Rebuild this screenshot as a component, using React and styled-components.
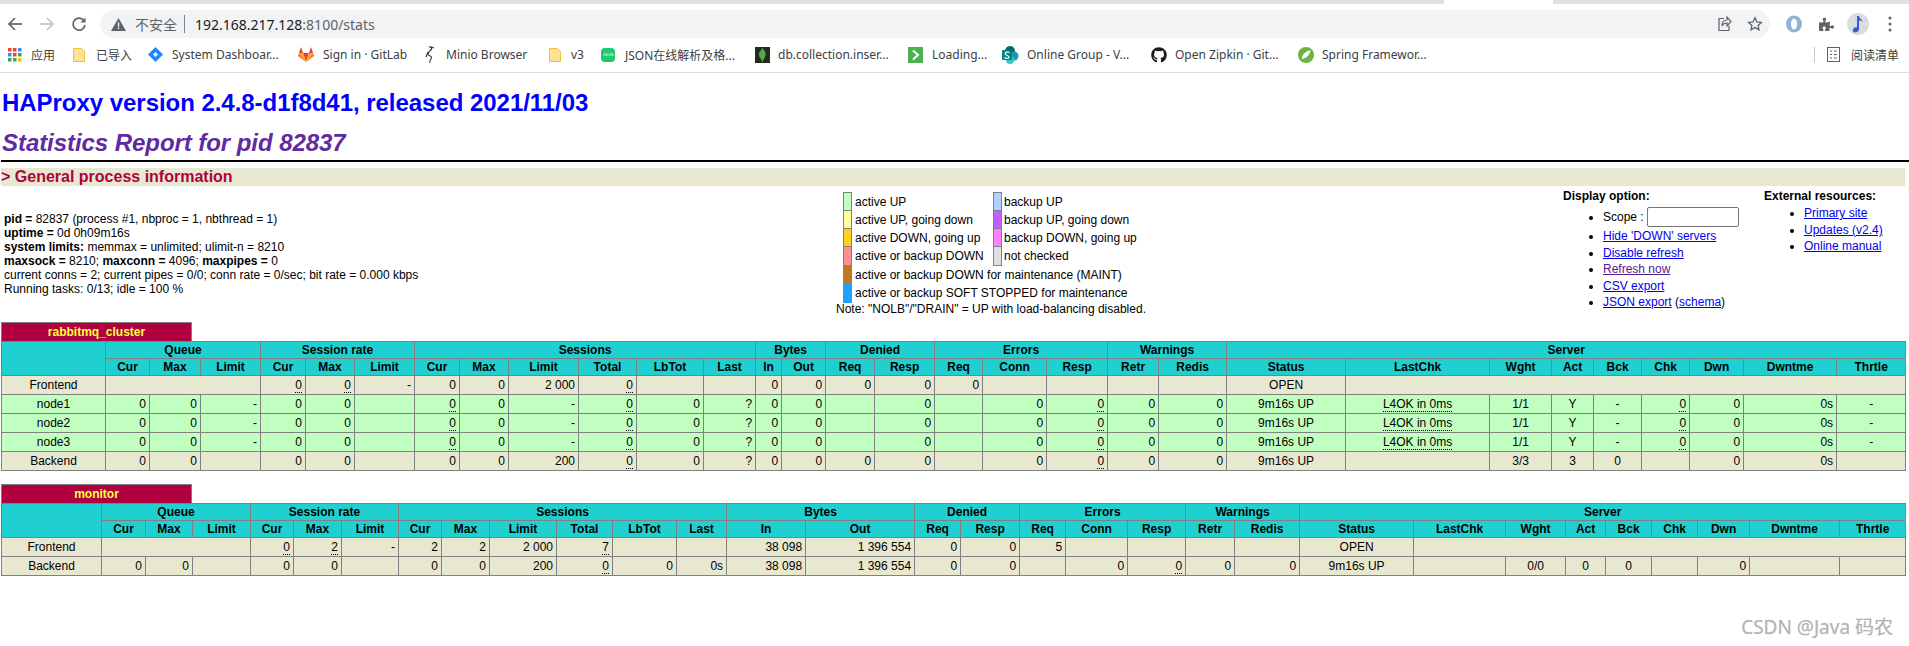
import React from 'react';
import styled, { createGlobalStyle } from 'styled-components';
import { FaGithub, FaPuzzlePiece } from 'react-icons/fa';

const GlobalStyle = createGlobalStyle`
	html, body {
		margin: 0;
		padding: 0;
		background: #fff;
		overflow: hidden;
	}
	body {
		font-family: "Liberation Sans", Arial, sans-serif;
		font-size: 12px;
		color: #000;
	}
`;

const Page = styled.div`
	position: relative;
	width: 1909px;
	height: 646px;
	overflow: hidden;
`;

const TabStrip = styled.div`
	height: 4px;
	background: linear-gradient(
		to right,
		#dee1e6 1444px,
		#fff 1444px,
		#fff 1553px,
		#dee1e6 1553px
	);
`;

const Toolbar = styled.div`
	display: flex;
	align-items: center;
	height: 36px;
	padding: 4px 0 0 6px;
	box-sizing: border-box;
`;

const NavButton = styled.div`
	display: flex;
	align-items: center;
	justify-content: center;
	width: 18px;
	height: 18px;
	margin-right: ${(p) => p.$gap}px;
`;

const Omnibox = styled.div`
	display: flex;
	align-items: center;
	width: 1670px;
	height: 28px;
	margin-left: 4px;
	padding: 0 7px 0 11px;
	box-sizing: border-box;
	border-radius: 14px;
	background: #f1f3f4;
`;

const Insecure = styled.span`
	margin-left: 9px;
	padding-right: 7px;
	border-right: 1px solid #80868b;
	font-family: "Noto Sans CJK SC", sans-serif;
	font-size: 14px;
	line-height: 18px;
	color: #5f6368;
`;

const Url = styled.span`
	flex: 1;
	margin-left: 10px;
	font-family: "Noto Sans", sans-serif;
	font-size: 14px;
	color: #5f6368;
	b {
		font-weight: 400;
		color: #202124;
	}
`;

const BoxIcons = styled.div`
	display: flex;
	align-items: center;
	gap: 15px;
`;

const ToolIcons = styled.div`
	display: flex;
	align-items: center;
	margin-left: 8px;
`;

const ToolSlot = styled.div`
	display: flex;
	align-items: center;
	justify-content: center;
	width: 32px;
`;

const Avatar = styled.div`
	display: flex;
	align-items: center;
	justify-content: center;
	width: 22px;
	height: 22px;
	border-radius: 50%;
	background: #dadce0;
`;

const Bookmarks = styled.div`
	display: flex;
	align-items: center;
	height: 33px;
	padding: 0 0 3px 8px;
	box-sizing: border-box;
	border-bottom: 1px solid #dadce0;
`;

const Bookmark = styled.div`
	display: flex;
	align-items: center;
	flex: none;
	width: ${(p) => p.$w}px;
	gap: ${(p) => p.$gap || 9}px;
	font-family: "Noto Sans", "Noto Sans CJK SC", sans-serif;
	font-size: 12px;
	color: #3c4043;
	white-space: nowrap;
	svg {
		flex: none;
	}
`;

const ReadingList = styled.div`
	display: flex;
	align-items: center;
	margin-left: auto;
	height: 16px;
	padding: 0 10px 0 12px;
	gap: 11px;
	border-left: 1px solid #c4c7cc;
	font-family: "Noto Sans CJK SC", sans-serif;
	font-size: 12px;
	color: #3c4043;
`;

const JsonBadge = styled.div`
	display: flex;
	align-items: center;
	justify-content: center;
	width: 14px;
	height: 14px;
	border-radius: 4px;
	background: #1fc96e;
	color: #fff;
	font-size: 4px;
	font-family: "Liberation Sans", sans-serif;
`;

const Stats = styled.main`
	padding: 0 4px 0 1px;
`;

const Title = styled.h1`
	margin: 0;
	padding: 16px 0 0 1px;
	font-size: 24px;
	line-height: 28px;
	font-weight: bold;
	letter-spacing: -0.04px;
	color: #0000ff;
`;

const Subtitle = styled.h2`
	margin: 12px 0 0 1px;
	font-size: 24px;
	line-height: 28px;
	font-weight: bold;
	font-style: italic;
	letter-spacing: -0.06px;
	color: #602aa0;
`;

const Rule = styled.hr`
	height: 2px;
	margin: 3px 0 6px;
	border: 0;
	background: #000;
	width: 1908px;
`;

const SectionBar = styled.h3`
	margin: 0;
	height: 18px;
	font-size: 16px;
	line-height: 18px;
	font-weight: bold;
	color: #b00040;
	background: #e8e8d0;
`;

const InfoPanel = styled.div`
	display: grid;
	grid-template-columns: 835px 727px 201px 1fr;
	height: 136px;
`;

const ProcessInfo = styled.div`
	padding: 26px 0 0 3px;
	line-height: 14px;
	b {
		font-weight: bold;
	}
`;

const LegendBlock = styled.div`
	padding-top: 6px;
`;

const LegendGrid = styled.div`
	display: grid;
	grid-template-columns: 16px 141px 9px auto;
	grid-template-rows: 18px 18px 18px 19px 18px 19px;
	width: max-content;
`;

const Swatch = styled.div`
	grid-column: ${(p) => (p.$second ? 3 : 1)};
	justify-self: end;
	width: 9px;
	height: calc(100% + 1px);
	box-sizing: border-box;
	border: 1px solid ${(p) => p.$border || '#808080'};
	background: ${(p) => p.$color};
`;

const LegendText = styled.div`
	grid-column: ${(p) => (p.$wide ? '2 / -1' : p.$second ? 4 : 2)};
	padding: 1px 0 0 ${(p) => (p.$second ? 2 : 3)}px;
	line-height: 18px;
	white-space: nowrap;
`;

const Note = styled.div`
	line-height: 14px;
`;

const OptionBlock = styled.div`
	padding-top: 3px;
`;

const OptionTitle = styled.b`
	display: block;
	line-height: 14px;
	font-weight: bold;
`;

const OptionList = styled.ul`
	margin: ${(p) => p.$top}px 0 0;
	padding: 0 0 0 40px;
	line-height: 16.6px;
`;

const ScopeItem = styled.li`
	height: 21px;
	line-height: 20px;
`;

const ScopeInput = styled.input`
	width: 92px;
	height: 20px;
	padding: 0;
	box-sizing: border-box;
	border: 1px solid #767676;
	border-radius: 2px;
	vertical-align: top;
	background: #fff;
`;

const Link = styled.a`
	color: ${(p) => (p.$visited ? '#551a8b' : '#0000ee')};
	text-decoration: underline;
`;

const ProxyName = styled.div`
	width: 191px;
	height: 19px;
	box-sizing: border-box;
	border: 1px solid #808080;
	border-bottom: 0;
	background: #b00040;
	color: #ffff40;
	font-weight: bold;
	line-height: 18px;
	text-align: center;
`;

const ProxyTable = styled.table`
	table-layout: fixed;
	width: 1904px;
	margin-bottom: ${(p) => p.$gap}px;
	border-collapse: collapse;
`;

const HeadCell = styled.th`
	height: 17px;
	padding: 0 3px;
	box-sizing: border-box;
	border: 1px solid #808080;
	background: #20d0d0;
	font-weight: bold;
	font-size: 12px;
	text-align: center;
`;

const Cell = styled.td`
	height: 19px;
	padding: 0 3px;
	box-sizing: border-box;
	border: 1px solid #808080;
	background: ${(p) => p.$bg};
	font-size: 12px;
	text-align: ${(p) => (p.$center ? 'center' : 'right')};
	white-space: nowrap;
`;

const Tip = styled.span`
	border-bottom: 1px dotted #000;
`;

const Watermark = styled.div`
	position: absolute;
	right: 16px;
	bottom: 6px;
	font-family: "Noto Sans", "Noto Sans CJK SC", sans-serif;
	font-size: 19px;
	color: #b4b4b4;
	text-shadow: 0 0 1px #d8d8d8;
`;

const FRONT_BG = '#e8e8d0';
const UP_BG = '#c0ffc0';
const CENTER_COLS = [0, 22, 23, 24, 25, 26, 30];

const GROUPS = [
	['Queue', 3],
	['Session rate', 3],
	['Sessions', 6],
	['Bytes', 2],
	['Denied', 2],
	['Errors', 3],
	['Warnings', 2],
	['Server', 9],
];

const SUBHEADS = [
	'Cur', 'Max', 'Limit', 'Cur', 'Max', 'Limit', 'Cur', 'Max', 'Limit', 'Total', 'LbTot', 'Last',
	'In', 'Out', 'Req', 'Resp', 'Req', 'Conn', 'Resp', 'Retr', 'Redis', 'Status', 'LastChk',
	'Wght', 'Act', 'Bck', 'Chk', 'Dwn', 'Dwntme', 'Thrtle',
];

const nodeRow = (name) => ({
	bg: UP_BG,
	cells: [
		name, '0', '0', '-', '0', '0', '', '~0', '0', '-', '~0', '0', '?', '0', '0', '', '0', '', '0', '~0',
		'0', '0', '9m16s UP', '~L4OK in 0ms', '1/1', 'Y', '-', '~0', '0', '0s', '-',
	],
});

const CLUSTER = {
	name: 'rabbitmq_cluster',
	gap: 13,
	widths: [104, 44, 51, 60, 45, 49, 60, 45, 49, 70, 58, 67, 52, 26, 44, 49, 60, 48, 64, 61, 51, 68, 119, 144, 62, 42, 48, 48, 54, 93, 69],
	rows: [
		{
			bg: FRONT_BG,
			cells: [
				'Frontend', { span: 3 }, '~0', '~0', '-', '0', '0', '2 000', '~0', '', '', '0', '0', '0', '0', '0', '', '',
				'', '', 'OPEN', { span: 8 },
			],
		},
		nodeRow('node1'),
		nodeRow('node2'),
		nodeRow('node3'),
		{
			bg: FRONT_BG,
			cells: [
				'Backend', '0', '0', '', '0', '0', '', '0', '0', '200', '~0', '0', '?', '0', '0', '0', '0', '', '0', '~0',
				'0', '0', '9m16s UP', '', '3/3', '3', '0', '', '0', '0s', '',
			],
		},
	],
};

const MONITOR = {
	name: 'monitor',
	gap: 0,
	widths: [100, 44, 47, 58, 43, 48, 57, 43, 48, 67, 56, 64, 50, 79, 109, 46, 59, 46, 62, 58, 49, 65, 114, 92, 60, 40, 46, 46, 52, 90, 66],
	rows: [
		{
			bg: FRONT_BG,
			cells: [
				'Frontend', { span: 3 }, '~0', '~2', '-', '2', '2', '2 000', '~7', '', '', '38 098', '1 396 554', '0', '0', '5', '', '',
				'', '', 'OPEN', { span: 8 },
			],
		},
		{
			bg: FRONT_BG,
			cells: [
				'Backend', '0', '0', '', '0', '0', '', '0', '0', '200', '~0', '0', '0s', '38 098', '1 396 554', '0', '0', '', '0', '~0',
				'0', '0', '9m16s UP', '', '0/0', '0', '0', '', '0', '', '',
			],
		},
	],
};

const LEGEND = [
	[['#c0ffc0', 'active UP'], ['#b0d0ff', 'backup UP']],
	[['#ffffa0', 'active UP, going down'], ['#c060ff', 'backup UP, going down']],
	[['#ffd020', 'active DOWN, going up'], ['#ff80ff', 'backup DOWN, going up']],
	[['#ff9090', 'active or backup DOWN'], ['#e0e0e0', 'not checked']],
	[['#c07820', 'active or backup DOWN for maintenance (MAINT)']],
	[['#20a0ff', 'active or backup SOFT STOPPED for maintenance']],
];

const Value = ({ text }) => {
	if (text.startsWith('~')) {
		return <Tip>{text.slice(1)}</Tip>;
	}
	return text;
};

const Row = ({ row }) => {
	let col = 0;
	return (
		<tr>
			{row.cells.map((cell, i) => {
				const span = cell.span || 1;
				const center = CENTER_COLS.includes(col);
				col += span;
				return (
					<Cell key={i} colSpan={span} $bg={row.bg} $center={center}>
						{typeof cell === 'string' && <Value text={cell} />}
					</Cell>
				);
			})}
		</tr>
	);
};

const Proxy = ({ data }) => (
	<>
		<ProxyName>{data.name}</ProxyName>
		<ProxyTable $gap={data.gap}>
			<colgroup>
				{data.widths.map((w, i) => (
					<col key={i} width={w} />
				))}
			</colgroup>
			<thead>
				<tr>
					<HeadCell rowSpan={2} />
					{GROUPS.map(([label, span]) => (
						<HeadCell key={label} colSpan={span}>
							{label}
						</HeadCell>
					))}
				</tr>
				<tr>
					{SUBHEADS.map((label, i) => (
						<HeadCell key={i}>{label}</HeadCell>
					))}
				</tr>
			</thead>
			<tbody>
				{data.rows.map((row, i) => (
					<Row key={i} row={row} />
				))}
			</tbody>
		</ProxyTable>
	</>
);

const Legend = () => (
	<LegendBlock>
		<LegendGrid>
			{LEGEND.map((pair, i) => (
				<React.Fragment key={i}>
					<Swatch $color={pair[0][0]} $border={i > 3 ? pair[0][0] : undefined} />
					<LegendText $wide={pair.length === 1}>{pair[0][1]}</LegendText>
					{pair[1] && <Swatch $second $color={pair[1][0]} />}
					{pair[1] && <LegendText $second>{pair[1][1]}</LegendText>}
				</React.Fragment>
			))}
		</LegendGrid>
		<Note>Note: "NOLB"/"DRAIN" = UP with load-balancing disabled.</Note>
	</LegendBlock>
);

const Arrow = ({ color, flip }) => (
	<svg width="16" height="16" viewBox="0 0 16 16" fill="none" stroke={color} strokeWidth="1.7">
		<g transform={flip ? 'rotate(180 8 8)' : undefined}>
			<path d="M15 8H2" />
			<path d="M8 2 2 8l6 6" />
		</g>
	</svg>
);

const Reload = () => (
	<svg width="16" height="16" viewBox="0 0 16 16" fill="none">
		<path d="M13.2 5A6 6 0 1 0 14 9" stroke="#5f6368" strokeWidth="1.7" />
		<path d="M14.5 1.5v5h-5z" fill="#5f6368" />
	</svg>
);

const Warning = () => (
	<svg width="15" height="13" viewBox="0 0 15 13">
		<path d="M7.5 0 15 13H0z" fill="#5f6368" />
		<path d="M6.8 4.5h1.4v4.2H6.8zM6.8 9.6h1.4V11H6.8z" fill="#f1f3f4" />
	</svg>
);

const Share = () => (
	<svg width="16" height="16" viewBox="0 0 16 16" fill="none" stroke="#5f6368" strokeWidth="1.2">
		<path d="M8 2.5H3v12h10v-5" />
		<path d="M11 1v3C7.5 4 6 6.5 6 10c1-2.2 2.500-3 5-3v3l4-4.500z" />
	</svg>
);

const Star = () => (
	<svg width="16" height="16" viewBox="0 0 16 16" fill="none" stroke="#5f6368" strokeWidth="1.3">
		<path d="m8 1.800 1.900 4.100 4.500.5-3.300 3 .9 4.400L8 11.600l-4 2.200.9-4.400-3.300-3 4.500-.5z" />
	</svg>
);

const RingExtension = () => (
	<svg width="18" height="18" viewBox="0 0 18 18">
		<ellipse cx="9" cy="9" rx="8" ry="8.500" fill="#8fb4d8" />
		<ellipse cx="9" cy="9" rx="3" ry="5.500" fill="#fff" />
	</svg>
);

const MusicNote = () => (
	<svg width="14" height="18" viewBox="0 0 14 18">
		<path d="M6 1h2c.5 3 3 3.500 4 6-1.500-1-2.800-1.500-4-1.500V14c0 2-1.800 3.500-3.800 3.500S1.500 16 2 14.500 4.500 12 6 12.500z" fill="#2f5fd0" />
	</svg>
);

const Kebab = () => (
	<svg width="4" height="16" viewBox="0 0 4 16" fill="#5f6368">
		<circle cx="2" cy="2" r="1.500" />
		<circle cx="2" cy="8" r="1.500" />
		<circle cx="2" cy="14" r="1.500" />
	</svg>
);

const APP_COLORS = ['#ea4335', '#ea4335', '#4285f4', '#4285f4', '#ea4335', '#34a853', '#34a853', '#34a853', '#fbbc05'];

const Apps = () => (
	<svg width="14" height="14" viewBox="0 0 14 14">
		{APP_COLORS.map((c, i) => (
			<rect key={i} x={(i % 3) * 5} y={Math.floor(i / 3) * 5} width="3.500" height="3.500" fill={c} />
		))}
	</svg>
);

const Folder = () => (
	<svg width="12" height="14" viewBox="0 0 12 14">
		<path d="M.5.500h8l3 3v10H.5z" fill="#fde293" stroke="#f2c230" />
	</svg>
);

const Diamond = () => (
	<svg width="15" height="15" viewBox="0 0 15 15">
		<path d="M7.500 0 15 7.500 7.500 15 0 7.500z" fill="#2684ff" />
		<path d="M7.500 5 10 7.500 7.500 10 5 7.500z" fill="#fff" />
	</svg>
);

const GitlabFox = () => (
	<svg width="16" height="15" viewBox="0 0 16 15">
		<path d="M8 15 0 9l1-3z" fill="#fc6d26" />
		<path d="M8 15 16 9l-1-3z" fill="#fc6d26" />
		<path d="M8 15 5 6h6z" fill="#e24329" />
		<path d="M1 6 3 0l2 6zM15 6l-2-6-2 6z" fill="#e24329" />
		<path d="M1 6h4l3 9zM15 6h-4l-3 9z" fill="#fca326" />
	</svg>
);

const Heron = () => (
	<svg width="10" height="18" viewBox="0 0 10 18" fill="none" stroke="#2b2b2b" strokeWidth="1.100">
		<path d="M4 1c2-.5 3 .5 2.500 2S3 6 3 8s3.500 1.500 3.500 3.500S4 14 5 17" />
		<path d="M6 1 9 2" />
		<path d="M3 6 1 11" />
	</svg>
);

const MongoLeaf = () => (
	<svg width="15" height="16" viewBox="0 0 15 16">
		<rect width="15" height="16" fill="#262a1e" />
		<path d="M7.500 1c2.500 3 3.500 5 3 7.500S8.500 12 7.800 15h-.6C6.500 12 4.500 11 4 8.500S5 4 7.500 1z" fill="#4fa94d" />
	</svg>
);

const LoadingIcon = () => (
	<svg width="15" height="16" viewBox="0 0 15 16">
		<rect width="15" height="16" fill="#4caf50" />
		<path d="m5 3.500 5 4.500-5 4.500" fill="none" stroke="#fff" strokeWidth="2" />
	</svg>
);

const SharePoint = () => (
	<svg width="17" height="18" viewBox="0 0 17 18">
		<circle cx="8" cy="5" r="5" fill="#036c70" />
		<circle cx="12" cy="10" r="4.500" fill="#1a9ba1" />
		<circle cx="8" cy="14" r="4" fill="#37c6d0" />
		<rect y="4" width="10" height="10" rx="1" fill="#038387" />
		<path d="M7.500 6.500C6 5.800 3 6 3.200 7.800S7.500 9.500 7 11.300 3.500 12.300 2.500 11.500" fill="none" stroke="#fff" strokeWidth="1.300" />
	</svg>
);

const SpringLeaf = () => (
	<svg width="16" height="16" viewBox="0 0 16 16">
		<circle cx="8" cy="8" r="8" fill="#6db33f" />
		<path d="M12.500 3C12 7.500 9 11 4 12 3.500 8 7 4.500 12.500 3z" fill="#fff" />
	</svg>
);

const ReadingIcon = () => (
	<svg width="13" height="15" viewBox="0 0 13 15" fill="none" stroke="#5f6368">
		<rect x=".5" y=".5" width="12" height="14" />
		<path d="M3 4h2M7 4h3M3 7.500h2M7 7.500h3M3 11h2M7 11h3" />
	</svg>
);

const Chrome = () => (
	<>
		<TabStrip />
		<Toolbar>
			<NavButton $gap={14}>
				<Arrow color="#5f6368" />
			</NavButton>
			<NavButton $gap={14}>
				<Arrow color="#bdc1c6" flip />
			</NavButton>
			<NavButton $gap={8}>
				<Reload />
			</NavButton>
			<Omnibox>
				<Warning />
				<Insecure>不安全</Insecure>
				<Url>
					<b>192.168.217.128</b>:8100/stats
				</Url>
				<BoxIcons>
					<Share />
					<Star />
				</BoxIcons>
			</Omnibox>
			<ToolIcons>
				<ToolSlot><RingExtension /></ToolSlot>
				<ToolSlot><FaPuzzlePiece size={15} color="#5f6368" /></ToolSlot>
				<ToolSlot>
					<Avatar>
						<MusicNote />
					</Avatar>
				</ToolSlot>
				<ToolSlot><Kebab /></ToolSlot>
			</ToolIcons>
		</Toolbar>
		<Bookmarks>
			<Bookmark $w={65}><Apps />应用</Bookmark>
			<Bookmark $w={75} $gap={11}><Folder />已导入</Bookmark>
			<Bookmark $w={150}><Diamond />System Dashboar...</Bookmark>
			<Bookmark $w={127}><GitlabFox />Sign in · GitLab</Bookmark>
			<Bookmark $w={124} $gap={11}><Heron />Minio Browser</Bookmark>
			<Bookmark $w={52} $gap={10}><Folder />v3</Bookmark>
			<Bookmark $w={154} $gap={10}><JsonBadge>JSON</JsonBadge>JSON在线解析及格...</Bookmark>
			<Bookmark $w={153} $gap={8}><MongoLeaf />db.collection.inser...</Bookmark>
			<Bookmark $w={94}><LoadingIcon />Loading...</Bookmark>
			<Bookmark $w={149} $gap={8}><SharePoint />Online Group - V...</Bookmark>
			<Bookmark $w={147} $gap={8}><FaGithub size={16} color="#1b1f23" />Open Zipkin · Git...</Bookmark>
			<Bookmark $w={140} $gap={8}><SpringLeaf />Spring Framewor...</Bookmark>
			<ReadingList><ReadingIcon />阅读清单</ReadingList>
		</Bookmarks>
	</>
);

const App = () => (
	<Page>
		<GlobalStyle />
		<Chrome />
		<Stats>
			<Title>HAProxy version 2.4.8-d1f8d41, released 2021/11/03</Title>
			<Subtitle>Statistics Report for pid 82837</Subtitle>
			<Rule />
			<SectionBar>&gt; General process information</SectionBar>
			<InfoPanel>
				<ProcessInfo>
					<b>pid = </b>82837 (process #1, nbproc = 1, nbthread = 1)<br />
					<b>uptime = </b>0d 0h09m16s<br />
					<b>system limits:</b> memmax = unlimited; ulimit-n = 8210<br />
					<b>maxsock = </b>8210; <b>maxconn = </b>4096; <b>maxpipes = </b>0<br />
					current conns = 2; current pipes = 0/0; conn rate = 0/sec; bit rate = 0.000 kbps<br />
					Running tasks: 0/13; idle = 100 %
				</ProcessInfo>
				<Legend />
				<OptionBlock>
					<OptionTitle>Display option:</OptionTitle>
					<OptionList $top={4}>
						<ScopeItem>Scope : <ScopeInput /></ScopeItem>
						<li><Link href="#hide">Hide 'DOWN' servers</Link></li>
						<li><Link href="#refresh">Disable refresh</Link></li>
						<li><Link href="#now" $visited>Refresh now</Link></li>
						<li><Link href="#csv">CSV export</Link></li>
						<li><Link href="#json">JSON export</Link> (<Link href="#schema">schema</Link>)</li>
					</OptionList>
				</OptionBlock>
				<OptionBlock>
					<OptionTitle>External resources:</OptionTitle>
					<OptionList $top={2}>
						<li><Link href="#site">Primary site</Link></li>
						<li><Link href="#updates">Updates (v2.4)</Link></li>
						<li><Link href="#manual">Online manual</Link></li>
					</OptionList>
				</OptionBlock>
			</InfoPanel>
			<Proxy data={CLUSTER} />
			<Proxy data={MONITOR} />
		</Stats>
		<Watermark>CSDN @Java 码农</Watermark>
	</Page>
);

export default App;
